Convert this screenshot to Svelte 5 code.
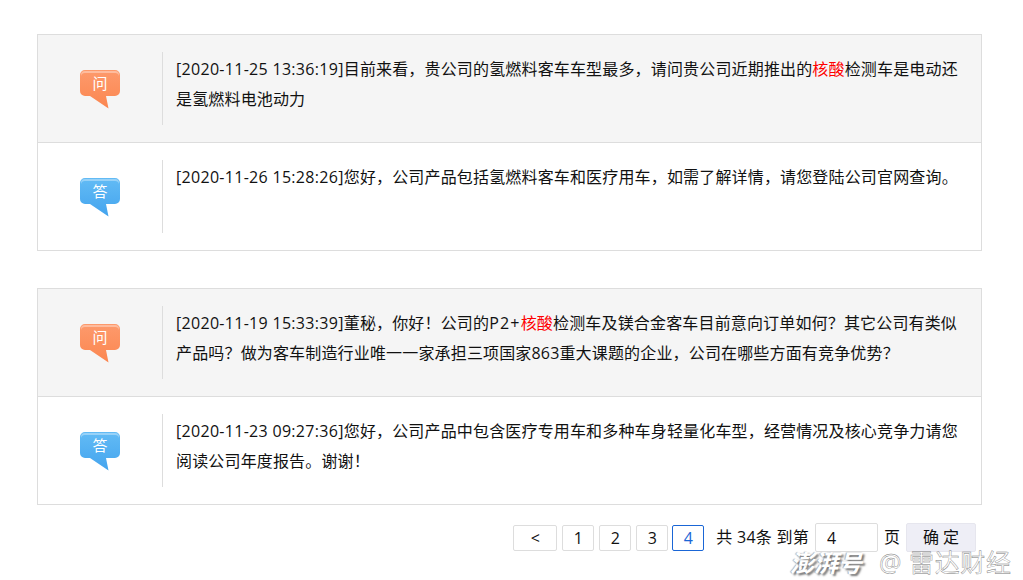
<script>
  const items = [
    {
      time: "[2020-11-25 13:36:19]",
      q: ["目前来看，贵公司的氢燃料客车车型最多，请问贵公司近期推出的", "", "核酸", "检测车是电动还是氢燃料电池动力"],
      atime: "[2020-11-26 15:28:26]",
      a: "您好，公司产品包括氢燃料客车和医疗用车，如需了解详情，请您登陆公司官网查询。"
    },
    {
      time: "[2020-11-19 15:33:39]",
      q: ["董秘，你好！公司的", "P2+", "核酸", "检测车及镁合金客车目前意向订单如何？其它公司有类似产品吗？做为客车制造行业唯一一家承担三项国家863重大课题的企业，公司在哪些方面有竞争优势？"],
      atime: "[2020-11-23 09:27:36]",
      a: "您好，公司产品中包含医疗专用车和多种车身轻量化车型，经营情况及核心竞争力请您阅读公司年度报告。谢谢！"
    }
  ];
  const pages = [1, 2, 3, 4];
</script>

{#snippet bubble(kind, label, top, bottom)}
  <div class="bubble {kind}">
    <svg viewBox="0 0 42 40" width="42" height="40">
      <defs>
        <linearGradient id="grad-{kind}" x1="0" y1="0" x2="0" y2="1">
          <stop offset="0" stop-color={top} />
          <stop offset="1" stop-color={bottom} />
        </linearGradient>
      </defs>
      <path class="shape" fill="url(#grad-{kind})" d="M6 1h30a5 5 0 0 1 5 5v16a5 5 0 0 1-5 5h-9l2.500 12.500L11 27H6a5 5 0 0 1-5-5V6a5 5 0 0 1 5-5z" />
      <path class="shine" d="M6 2h30a4 4 0 0 1 4 4v1a4 4 0 0 0-4-3H6a4 4 0 0 0-4 3V6a4 4 0 0 1 4-4z" />
    </svg>
    <span>{label}</span>
  </div>
{/snippet}

<div class="page">
  <div class="list">
    {#each items as item}
      <div class="card">
        <div class="row ask">
          <div class="icon">{@render bubble("orange", "问", "#fd9a6c", "#fb8650")}</div>
          <div class="body"><span class="ts">{item.time}</span>{item.q[0]}<span class="code">{item.q[1]}</span><em>{item.q[2]}</em>{item.q[3]}</div>
        </div>
        <div class="row">
          <div class="icon">{@render bubble("blue", "答", "#62bbf5", "#44a4ee")}</div>
          <div class="body"><span class="ts">{item.atime}</span>{item.a}</div>
        </div>
      </div>
    {/each}
  </div>

  <div class="pager">
    <button class="pg prev">&lt;</button>
    {#each pages as p}
      <button class="pg" class:current={p === 4}>{p}</button>
    {/each}
    <span class="total">共 34条 到第</span>
    <input class="goto" value="4" />
    <span class="unit">页</span>
    <button class="ok">确 定</button>
  </div>

  <div class="mark"><b>澎湃号</b><span>@ 雷达财经</span></div>
</div>

<style>
  :global(body) {
    background: #fff;
    font-family: "Open Sans", "Noto Sans CJK SC", sans-serif;
    overflow: hidden;
  }
  .page {
    position: relative;
    width: 1023px;
    height: 580px;
    box-sizing: border-box;
    padding: 34px 41px 0 37px;
    color: #111;
    font-size: 16px;
    overflow: hidden;
  }
  .list {
    display: flex;
    flex-direction: column;
    gap: 37px;
  }
  .card {
    border: 1px solid #ddd;
  }
  .row {
    display: flex;
    height: 107px;
    box-sizing: border-box;
    padding: 17px 0;
  }
  .row + .row {
    border-top: 1px solid #ddd;
    height: 108px;
  }
  .ask {
    background: #f5f5f5;
  }
  .icon {
    width: 124px;
    flex: none;
    display: flex;
    align-items: center;
    justify-content: center;
  }
  .body {
    flex: 1;
    border-left: 1px solid #ddd;
    padding: 2px 18px 0 13px;
    line-height: 30px;
    letter-spacing: 0.16px;
  }
  .ts {
    letter-spacing: 0.3px;
  }
  .code {
    letter-spacing: 1.2px;
  }
  em {
    font-style: normal;
    color: #f00;
  }
  .bubble {
    position: relative;
    width: 42px;
    height: 40px;
  }
  .bubble svg {
    display: block;
  }
  .shine {
    fill: rgba(255, 255, 255, 0.35);
  }
  .bubble span {
    position: absolute;
    left: 0;
    right: 0;
    top: 2px;
    text-align: center;
    color: #fff;
    font-size: 15px;
    line-height: 24px;
  }
  .pager {
    display: flex;
    align-items: flex-start;
    justify-content: flex-end;
    margin-top: 18px;
    padding-right: 6px;
    line-height: 25px;
  }
  .pg {
    width: 32px;
    height: 26px;
    margin: 2px 5px 0 0;
    padding: 0;
    border: 1px solid #ddd;
    border-radius: 2px;
    background: #fff;
    color: #111;
    font: inherit;
  }
  .prev {
    width: 44px;
  }
  .current {
    margin-left: -1px;
    margin-right: 0;
    border-color: #1a66d6;
    color: #1a66d6;
  }
  .total {
    margin: 2px 6px 0 12px;
    letter-spacing: 0.25px;
  }
  .goto {
    width: 63px;
    height: 29px;
    box-sizing: border-box;
    padding: 0 11px;
    border: 1px solid #ddd;
    border-radius: 2px;
    font: inherit;
    color: #111;
  }
  .unit {
    margin: 2px 6px 0 6px;
  }
  .ok {
    width: 70px;
    height: 29px;
    padding: 0;
    border: 1px solid #e6e6ee;
    border-radius: 2px;
    background: #eeeef6;
    color: #111;
    font: inherit;
  }
  .mark {
    position: absolute;
    left: 790px;
    top: 543px;
    display: flex;
    align-items: center;
    gap: 17px;
    color: #fff;
    white-space: nowrap;
  }
  .mark b {
    font-size: 24px;
    font-style: italic;
    text-shadow: 2px 2px 2px #777, -1px 0 1px #aaa;
  }
  .mark span {
    font-size: 25px;
    color: #fff;
    -webkit-text-stroke: 0.4px #777;
    letter-spacing: 0.6px;
  }
</style>
